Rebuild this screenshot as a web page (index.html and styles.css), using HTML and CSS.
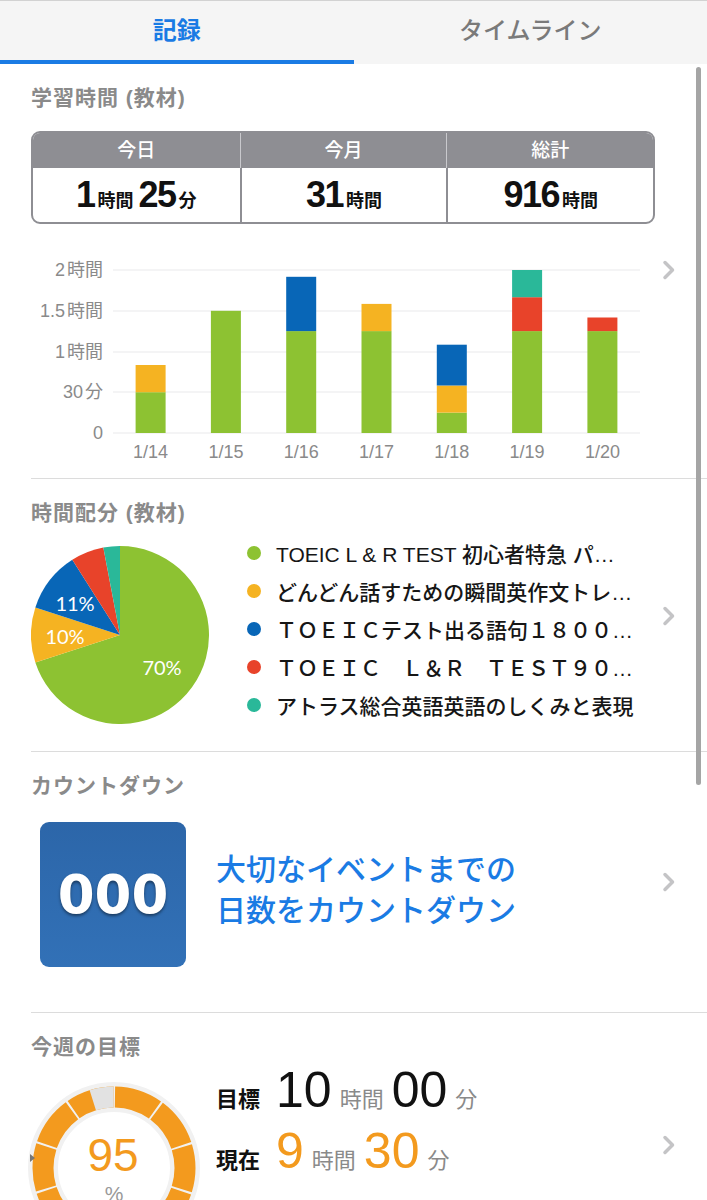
FILE: index.html
```html
<!DOCTYPE html>
<html lang="ja">
<head>
    <meta charset="UTF-8">
    <meta name="viewport" content="width=device-width, initial-scale=1.0">
    <title>記録</title>
    <link rel="stylesheet" href="styles.css">
</head>
<body>

<nav class="tabs">
    <div class="tab active">記録</div>
    <div class="tab">タイムライン</div>
</nav>

<main class="content">

    <!-- 学習時間 -->
    <section class="card">
        <h2 class="card-title">学習時間 (教材)</h2>

        <div class="stats">
            <div class="stats-head">今日</div>
            <div class="stats-head">今月</div>
            <div class="stats-head">総計</div>
            <div class="stats-value">
                <span><span class="num">1</span><span class="unit">時間</span><span class="num">25</span><span class="unit">分</span></span>
            </div>
            <div class="stats-value">
                <span><span class="num">31</span><span class="unit">時間</span></span>
            </div>
            <div class="stats-value">
                <span><span class="num">916</span><span class="unit">時間</span></span>
            </div>
        </div>

        <div class="card-row chart-row">
            <div class="card-main">
                <svg class="bar-chart" width="624" height="210" viewBox="0 0 624 210">
                    <g class="grid">
                        <line x1="82" y1="12" x2="609" y2="12"/>
                        <line x1="82" y1="53" x2="609" y2="53"/>
                        <line x1="82" y1="94" x2="609" y2="94"/>
                        <line x1="82" y1="134" x2="609" y2="134"/>
                        <line x1="82" y1="175" x2="609" y2="175"/>
                    </g>
                    <g class="axis-label" text-anchor="end">
                        <text x="72" y="12">2<tspan dx="2">時間</tspan></text>
                        <text x="72" y="53">1.5<tspan dx="2">時間</tspan></text>
                        <text x="72" y="94">1<tspan dx="2">時間</tspan></text>
                        <text x="72" y="134">30<tspan dx="2">分</tspan></text>
                        <text x="72" y="175">0</text>
                    </g>
                    <g class="bars">
                        <rect class="c-green" x="104.6" y="134.2" width="30" height="40.8"/>
                        <rect class="c-yellow" x="104.6" y="107" width="30" height="27.2"/>

                        <rect class="c-green" x="179.9" y="52.8" width="30" height="122.2"/>

                        <rect class="c-green" x="255.2" y="73.1" width="30" height="101.9"/>
                        <rect class="c-blue" x="255.2" y="18.8" width="30" height="54.3"/>

                        <rect class="c-green" x="330.5" y="73.1" width="30" height="101.9"/>
                        <rect class="c-yellow" x="330.5" y="45.9" width="30" height="27.2"/>

                        <rect class="c-green" x="405.8" y="154.6" width="30" height="20.4"/>
                        <rect class="c-yellow" x="405.8" y="127.5" width="30" height="27.1"/>
                        <rect class="c-blue" x="405.8" y="86.7" width="30" height="40.8"/>

                        <rect class="c-green" x="481.1" y="73.1" width="30" height="101.9"/>
                        <rect class="c-red" x="481.1" y="39.2" width="30" height="33.9"/>
                        <rect class="c-teal" x="481.1" y="12" width="30" height="27.2"/>

                        <rect class="c-green" x="556.4" y="73.1" width="30" height="101.9"/>
                        <rect class="c-red" x="556.4" y="59.5" width="30" height="13.6"/>
                    </g>
                    <g class="axis-label" text-anchor="middle">
                        <text x="119.6" y="194">1/14</text>
                        <text x="194.9" y="194">1/15</text>
                        <text x="270.2" y="194">1/16</text>
                        <text x="345.5" y="194">1/17</text>
                        <text x="420.8" y="194">1/18</text>
                        <text x="496.1" y="194">1/19</text>
                        <text x="571.4" y="194">1/20</text>
                    </g>
                </svg>
            </div>
            <svg class="chevron" viewBox="0 0 14 20"><path d="M3 2.5 L10.5 10 L3 17.5"/></svg>
        </div>
    </section>

    <!-- 時間配分 -->
    <section class="card card-pie">
        <h2 class="card-title">時間配分 (教材)</h2>
        <div class="card-row pie-row">
            <div class="card-main pie-main">
                <svg class="pie" width="178" height="178" viewBox="0 0 178 178">
                    <path class="c-green" d="M89 89 L89 0 A89 89 0 1 1 4.35 116.5 Z"/>
                    <path class="c-yellow" d="M89 89 L4.35 116.5 A89 89 0 0 1 4.35 61.5 Z"/>
                    <path class="c-blue" d="M89 89 L4.35 61.5 A89 89 0 0 1 41.31 13.86 Z"/>
                    <path class="c-red" d="M89 89 L41.31 13.86 A89 89 0 0 1 72.32 1.58 Z"/>
                    <path class="c-teal" d="M89 89 L72.32 1.58 A89 89 0 0 1 89 0 Z"/>
                    <g class="pie-label" text-anchor="middle">
                        <text x="131" y="121">70%</text>
                        <text x="34" y="90">10%</text>
                        <text x="44" y="57">11%</text>
                    </g>
                </svg>
                <ul class="legend">
                    <li><span class="dot bg-green"></span>TOEIC L &amp; R TEST 初心者特急 パ…</li>
                    <li><span class="dot bg-yellow"></span>どんどん話すための瞬間英作文トレ…</li>
                    <li><span class="dot bg-blue"></span>ＴＯＥＩＣテスト出る語句１８００…</li>
                    <li><span class="dot bg-red"></span>ＴＯＥＩＣ　Ｌ＆Ｒ　ＴＥＳＴ９０…</li>
                    <li><span class="dot bg-teal"></span>アトラス総合英語英語のしくみと表現</li>
                </ul>
            </div>
            <svg class="chevron" viewBox="0 0 14 20"><path d="M3 2.5 L10.5 10 L3 17.5"/></svg>
        </div>
    </section>

    <!-- カウントダウン -->
    <section class="card card-countdown">
        <h2 class="card-title">カウントダウン</h2>
        <div class="card-row countdown-row">
            <div class="card-main countdown-main">
                <div class="countdown-box">000</div>
                <p class="countdown-text">大切なイベントまでの<br>日数をカウントダウン</p>
            </div>
            <svg class="chevron" viewBox="0 0 14 20"><path d="M3 2.5 L10.5 10 L3 17.5"/></svg>
        </div>
    </section>

    <!-- 今週の目標 -->
    <section class="card card-goal">
        <h2 class="card-title">今週の目標</h2>
        <div class="card-row goal-row">
            <div class="card-main goal-main">
                <svg class="donut" width="172" height="172" viewBox="0 0 172 172">
                    <circle cx="86" cy="86" r="71" fill="none" stroke="#f1f1f1" stroke-width="30"/>
                    <circle cx="86" cy="86" r="71" fill="none" stroke="#f39a1e" stroke-width="21"
                            stroke-dasharray="42.61 2" stroke-dashoffset="-1" transform="rotate(-90 86 86)"/>
                    <circle cx="86" cy="86" r="71" fill="none" stroke="#e2e2e2" stroke-width="21"
                            stroke-dasharray="21.3 424.8" stroke-dashoffset="-423.8" transform="rotate(-90 86 86)"/>
                    <path d="M2 72 L7 76 L2 80 Z" fill="#777"/>
                    <text class="donut-value" x="85" y="73" text-anchor="middle">95</text>
                    <text class="donut-unit" x="86" y="111" text-anchor="middle">%</text>
                </svg>
                <div class="goal-lines">
                    <div class="goal-line">
                        <span class="goal-label">目標</span><span class="goal-num">10</span><span class="goal-unit">時間</span><span class="goal-num">00</span><span class="goal-unit">分</span>
                    </div>
                    <div class="goal-line current">
                        <span class="goal-label">現在</span><span class="goal-num">9</span><span class="goal-unit">時間</span><span class="goal-num">30</span><span class="goal-unit">分</span>
                    </div>
                </div>
            </div>
            <svg class="chevron" viewBox="0 0 14 20"><path d="M3 2.5 L10.5 10 L3 17.5"/></svg>
        </div>
    </section>

</main>

<div class="scrollbar"></div>

</body>
</html>
```

FILE: styles.css
```css
body {
    margin: 0;
    background: #fff;
    font-family: "Liberation Sans", "Noto Sans CJK JP", sans-serif;
    color: #111;
}

/* tabs */
.tabs {
    display: flex;
    height: 64px;
    box-sizing: border-box;
    background: #f5f5f5;
    border-top: 1px solid #d2d2d2;
}
.tab {
    flex: 1;
    text-align: center;
    font-size: 24px;
    line-height: 59px;
    font-weight: 500;
    color: #7a7a7a;
}
.tab.active {
    color: #1a7be4;
    font-weight: 700;
    border-bottom: 4px solid #1a7be4;
}

/* cards */
.card {
    margin-left: 31px;
    padding-top: 22px;
    border-bottom: 1px solid #dcdcdc;
}
.card-title {
    margin: 0;
    font-size: 21px;
    line-height: 24px;
    font-weight: 700;
    letter-spacing: 1px;
    color: #8a8a8a;
}
.card-row {
    display: flex;
    align-items: center;
}
.card-main {
    flex: 1;
    min-width: 0;
}
.chevron {
    flex-shrink: 0;
    width: 14px;
    height: 20px;
    margin: 0 31px 0 7px;
}
.chevron path {
    fill: none;
    stroke: #c4c4c6;
    stroke-width: 3.5;
    stroke-linecap: round;
    stroke-linejoin: round;
}

/* stats table */
.stats {
    display: grid;
    grid-template-columns: repeat(3, 1fr);
    margin: 21px 52px 0 0;
    border: 2px solid #8e8e93;
    border-radius: 9px;
    overflow: hidden;
}
.stats-head {
    background: #8e8e93;
    color: #fff;
    text-align: center;
    font-size: 19px;
    font-weight: 500;
    line-height: 35px;
}
.stats-head + .stats-head {
    border-left: 1px solid #c9c9cd;
}
.stats-value {
    height: 54px;
    display: flex;
    align-items: center;
    justify-content: center;
    border-left: 2px solid #8e8e93;
    font-weight: 700;
}
.stats-value:nth-child(4) {
    border-left: 0;
}
.stats-value .num {
    font-size: 36px;
    letter-spacing: -1.5px;
}
.stats-value .unit {
    font-size: 18px;
    margin: 0 5px 0 3px;
}
.stats-value .unit:last-child {
    margin-right: 0;
}

/* bar chart */
.chart-row {
    align-items: flex-start;
    margin-top: 34px;
    padding-bottom: 10px;
}
.chart-row .chevron {
    margin-top: 2px;
}
.bar-chart {
    display: block;
}
.grid line {
    stroke: #e9e9eb;
    stroke-width: 1;
}
.axis-label text {
    font-size: 18px;
    fill: #8a8a8a;
    dominant-baseline: central;
}
.c-green { fill: #8dc232; }
.c-yellow { fill: #f5b322; }
.c-blue { fill: #0866b7; }
.c-red { fill: #e8432a; }
.c-teal { fill: #2ab899; }
.bg-green { background: #8dc232; }
.bg-yellow { background: #f5b322; }
.bg-blue { background: #0866b7; }
.bg-red { background: #e8432a; }
.bg-teal { background: #2ab899; }

/* pie */
.pie-row {
    margin-top: 9px;
    padding-bottom: 27px;
}
.pie-row .chevron {
    margin-bottom: 26px;
}
.pie-main {
    display: flex;
    align-items: flex-start;
}
.pie {
    flex-shrink: 0;
    margin-top: 12px;
}
.pie-label text {
    font-family: "Lato", sans-serif;
    font-size: 20px;
    fill: #fff;
    dominant-baseline: central;
}
.legend {
    list-style: none;
    margin: 0 0 0 38px;
    padding: 0;
}
.legend li {
    display: flex;
    align-items: center;
    height: 38px;
    font-size: 21px;
    font-weight: 500;
    color: #161616;
    white-space: nowrap;
}
.dot {
    flex-shrink: 0;
    width: 14px;
    height: 14px;
    border-radius: 50%;
    margin-right: 15px;
}

/* countdown */
.countdown-row {
    margin-top: 24px;
    padding-bottom: 45px;
}
.countdown-row .chevron {
    margin-bottom: 25px;
}
.countdown-main {
    display: flex;
    align-items: center;
}
.countdown-box {
    flex-shrink: 0;
    width: 146px;
    height: 145px;
    margin-left: 9px;
    border-radius: 9px;
    background: linear-gradient(#2c66a9, #3271b7);
    color: #fff;
    font-family: "DejaVu Sans", sans-serif;
    font-weight: 700;
    font-size: 53px;
    line-height: 145px;
    text-align: center;
    text-shadow: 0 2px 3px rgba(0, 0, 0, 0.45);
}
.countdown-text {
    margin: 0 0 10px 30px;
    font-size: 30px;
    line-height: 41px;
    font-weight: 500;
    color: #1a7be4;
}

/* weekly goal */
.goal-row {
    align-items: flex-start;
    margin-top: 2px;
}
.goal-row .chevron {
    margin-top: 74px;
}
.goal-main {
    display: flex;
    align-items: flex-start;
}
.donut {
    flex-shrink: 0;
    margin: 21px 0 0 -3px;
}
.donut-value {
    font-size: 46px;
    fill: #f39a1e;
    dominant-baseline: central;
}
.donut-unit {
    font-size: 21px;
    fill: #999;
    dominant-baseline: central;
}
.goal-lines {
    margin-left: 16px;
}
.goal-line {
    display: flex;
    align-items: baseline;
    height: 61px;
    line-height: 58px;
    white-space: nowrap;
}
.goal-label {
    font-size: 22px;
    font-weight: 700;
    margin-right: 16px;
}
.goal-num {
    font-size: 50px;
}
.goal-unit {
    font-size: 22px;
    color: #8a8a8a;
    margin: 0 8px;
}
.current .goal-num {
    color: #f39a1e;
}

/* overlay scrollbar */
.scrollbar {
    position: fixed;
    top: 67px;
    right: 6px;
    width: 5px;
    height: 718px;
    border-radius: 3px;
    background: #a5a5a5;
}
```
